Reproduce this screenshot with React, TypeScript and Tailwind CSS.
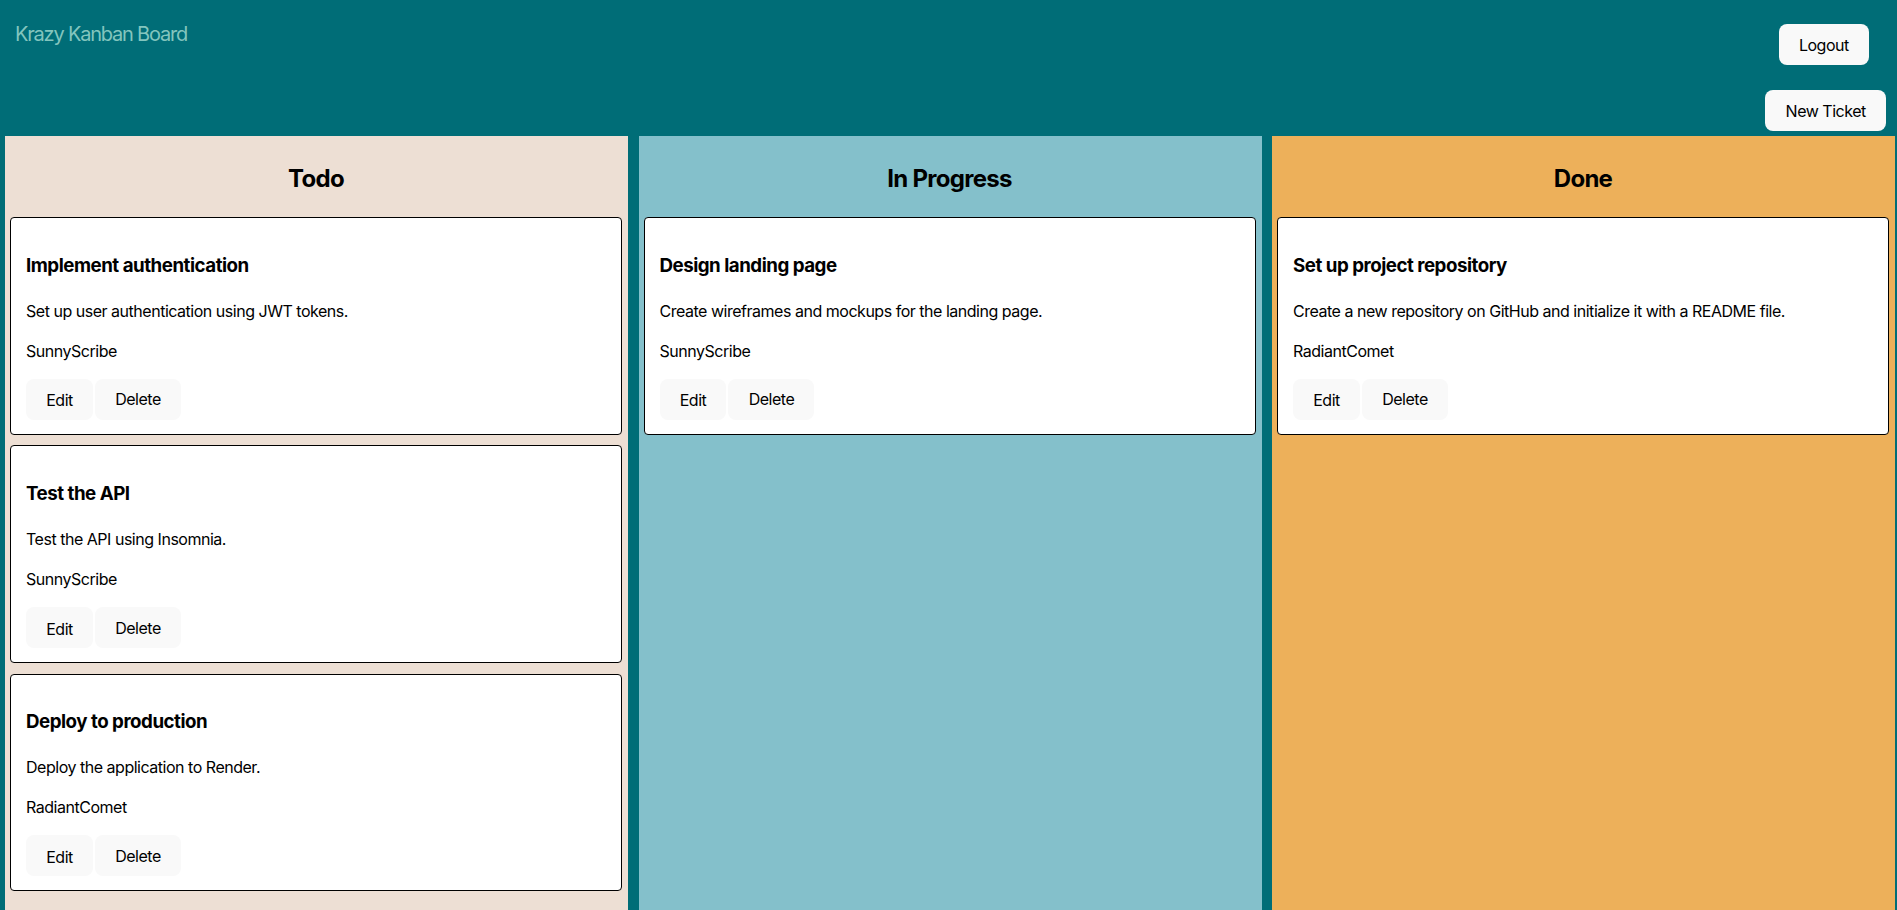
import React from 'react';

type Ticket = {
  id: number;
  name: string;
  description: string;
  user: string;
};

type Column = {
  title: string;
  bg: string;
  tickets: Ticket[];
};

const columns: Column[] = [
  {
    title: 'Todo',
    bg: 'bg-[#eddfd4]',
    tickets: [
      { id: 1, name: 'Implement authentication', description: 'Set up user authentication using JWT tokens.', user: 'SunnyScribe' },
      { id: 2, name: 'Test the API', description: 'Test the API using Insomnia.', user: 'SunnyScribe' },
      { id: 3, name: 'Deploy to production', description: 'Deploy the application to Render.', user: 'RadiantComet' },
    ],
  },
  {
    title: 'In Progress',
    bg: 'bg-[#84c0cb]',
    tickets: [
      { id: 4, name: 'Design landing page', description: 'Create wireframes and mockups for the landing page.', user: 'SunnyScribe' },
    ],
  },
  {
    title: 'Done',
    bg: 'bg-[#edb05a]',
    tickets: [
      { id: 5, name: 'Set up project repository', description: 'Create a new repository on GitHub and initialize it with a README file.', user: 'RadiantComet' },
    ],
  },
];

const btn =
  'bg-[#f9f9f9] text-black font-normal text-base leading-[normal] tracking-[-0.03em] rounded-lg border border-transparent px-[19.2px] py-[9.6px] cursor-pointer';

function TicketCard({ ticket }: { ticket: Ticket }): JSX.Element {
  return (
    <div className="bg-white border border-black rounded-[4px] px-[15px] pt-[15px] pb-[14px] text-black tracking-[-0.03em]">
      <h3 className="text-[18.72px] font-bold leading-[1.5] my-[18.72px]">{ticket.name}</h3>
      <p className="text-base leading-6 my-4">{ticket.description}</p>
      <p className="text-base leading-6 my-4">{ticket.user}</p>
      <div className="flex gap-[2px]">
        <button className={`${btn} pt-[10.6px] pb-[8.6px]`}>Edit</button>
        <button className={btn}>Delete</button>
      </div>
    </div>
  );
}

function Swimlane({ column }: { column: Column }): JSX.Element {
  return (
    <div className={`flex-1 ${column.bg} pl-[5px] pr-[6px] pt-[5px] pb-4`}>
      <h2 className="text-2xl font-bold text-center leading-9 my-[19.92px] text-black tracking-[-0.03em]">
        {column.title}
      </h2>
      <div className="flex flex-col gap-[10.5px]">
        {column.tickets.map((t) => (
          <TicketCard key={t.id} ticket={t} />
        ))}
      </div>
    </div>
  );
}

export default function App(): JSX.Element {
  return (
    <div className="min-h-screen flex flex-col bg-[#006d77] font-['Inter',sans-serif]">
      <header className="flex flex-col pb-[5px]">
        <div className="flex justify-between items-start">
          <h1 className="pl-[15px] pt-[19px] text-[20px] leading-[30px] font-normal tracking-[-0.06em] text-[#83c5be]">
            Krazy Kanban Board
          </h1>
          <button className={`${btn} mt-[24px] mr-[28px]`}>Logout</button>
        </div>
        <div className="flex justify-end pr-[11px] mt-[25px]">
          <button className={btn}>New Ticket</button>
        </div>
      </header>
      <main className="flex-1 flex items-stretch gap-[10.5px] pl-[5px] pr-[2px]">
        {columns.map((c) => (
          <Swimlane key={c.title} column={c} />
        ))}
      </main>
    </div>
  );
}
